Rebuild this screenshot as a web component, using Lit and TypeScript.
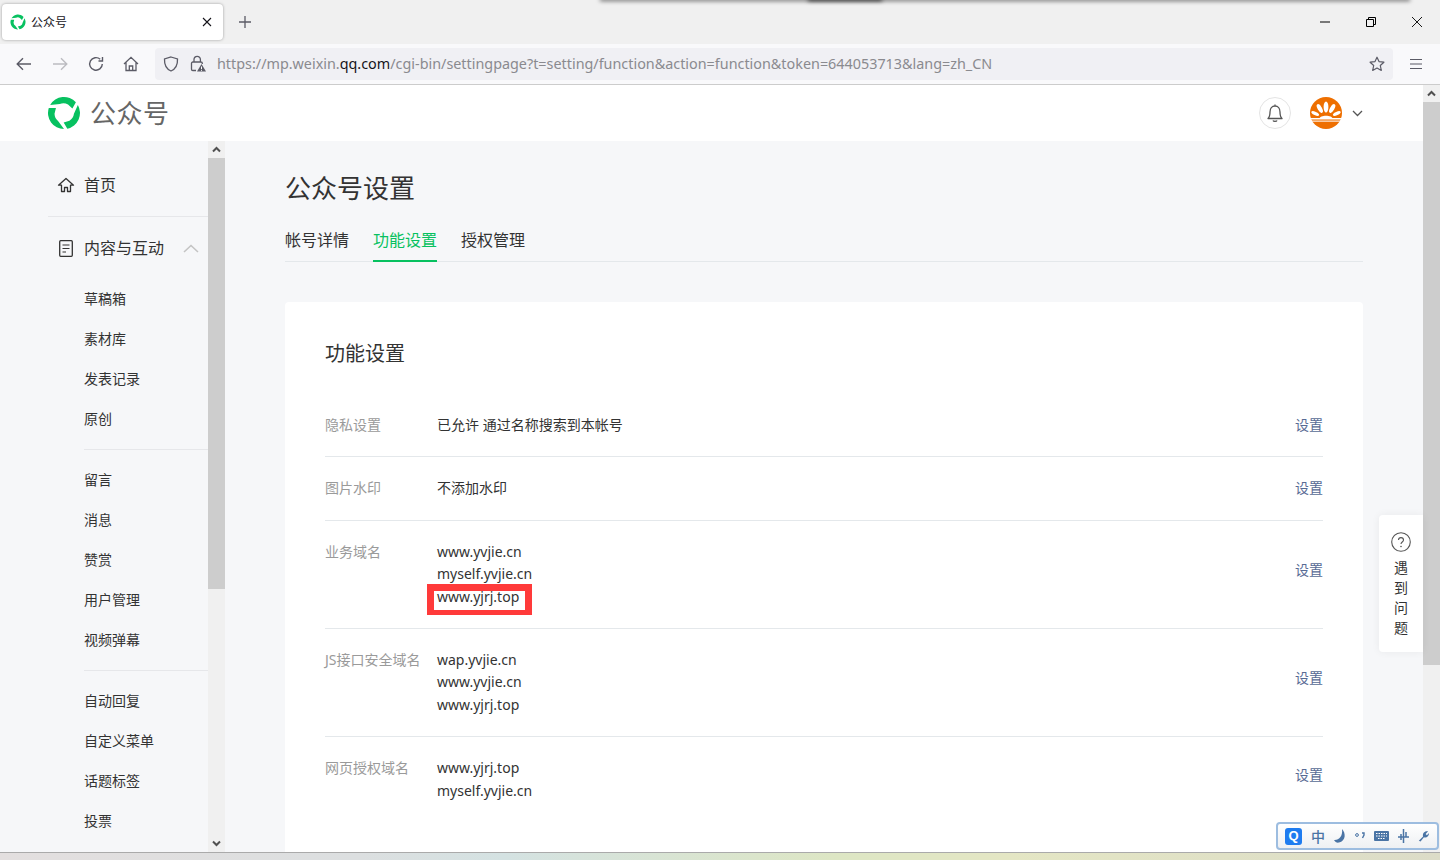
import { LitElement, html, css } from "lit";
import { customElement } from "lit/decorators.js";

const blade = "M3.14 9 A16 16 0 0 1 28.89 6.3 L25.39 12.54 L21.02 8.39 A9.5 9.5 0 0 0 12.77 7.94 Z";
const logo = (size: number) => html`<svg width=${size} height=${size} viewBox="0 0 34 34">
  <g fill="#07c160">
    <path d=${blade}/>
    <path d=${blade} transform="rotate(120 17 17)"/>
    <path d=${blade} transform="rotate(240 17 17)"/>
  </g>
</svg>`;

const chevron = (dir: "up" | "down") => html`<svg width="9" height="7" viewBox="0 0 9 7"><path d=${dir === "up" ? "M1 5.5 L4.5 2 L8 5.5" : "M1 1.5 L4.5 5 L8 1.5"} fill="none" stroke="#505050" stroke-width="2"/></svg>`;

const nav1 = ["草稿箱", "素材库", "发表记录", "原创"];
const nav2 = ["留言", "消息", "赞赏", "用户管理", "视频弹幕"];
const nav3 = ["自动回复", "自定义菜单", "话题标签", "投票"];

const rows = [
  { label: "隐私设置", lines: ["已允许 通过名称搜索到本帐号"], multi: false },
  { label: "图片水印", lines: ["不添加水印"], multi: false },
  { label: "业务域名", lines: ["www.yvjie.cn", "myself.yvjie.cn", "www.yjrj.top"], multi: true, mark: 2 },
  { label: "JS接口安全域名", lines: ["wap.yvjie.cn", "www.yvjie.cn", "www.yjrj.top"], multi: true },
  { label: "网页授权域名", lines: ["www.yjrj.top", "myself.yvjie.cn"], multi: true },
];

@customElement("app-root")
export class AppRoot extends LitElement {
  static styles = css`
    :host { display: block; width: 1440px; height: 860px; overflow: hidden; position: relative; font-family: "Noto Sans", "Noto Sans CJK SC", sans-serif; color: #333; }
    * { box-sizing: border-box; }
    .root { display: flex; flex-direction: column; height: 860px; }
    .tabbar { height: 44px; background: #f0f0f0; display: flex; align-items: flex-start; flex: none; }
    .tab { width: 221px; height: 36px; margin: 4px 0 0 2px; background: #fff; border-radius: 4px; box-shadow: 0 0 3px rgba(0,0,0,.35); display: flex; align-items: center; padding: 0 11px 0 8px; font-size: 12px; color: #15141a; gap: 5px; }
    .tab span { flex: 1; }
    .tab-new { margin: 10px 0 0 10px; width: 24px; height: 24px; display: flex; align-items: center; justify-content: center; }
    .win { margin-left: auto; display: flex; }
    .win div { width: 46px; height: 44px; display: flex; align-items: center; justify-content: center; }
    .toolbar { height: 41px; background: #f9f9fb; border-bottom: 1px solid #ccc; display: flex; align-items: center; flex: none; padding: 0 0 1px 0; }
    .tb { display: flex; justify-content: center; align-items: center; width: 36px; height: 32px; }
    .tb.first { margin-left: 6px; }
    .tb.home { margin-left: -1px; }
    .urlbar { margin-left: 6px; width: 1238px; height: 32px; background: #f0f0f4; border-radius: 4px; display: flex; align-items: center; padding: 0 8px 0 8px; }
    .lock { margin-left: 11px; }
    .url { margin-left: 11px; margin-bottom: 1px; font-size: 14.37px; color: #8a8a8f; white-space: nowrap; flex: 1; }
    .url b { font-weight: 400; color: #15141a; }
    .menu { margin-left: 5px; }
    .page { flex: 1; display: flex; min-height: 0; background: #f6f7f9; }
    .left { flex: 1; display: flex; flex-direction: column; min-width: 0; position: relative; }
    .header { height: 56px; background: #fff; flex: none; display: flex; align-items: center; padding: 0 60px 0 47px; }
    .brand { font-size: 26px; letter-spacing: .5px; color: #666; margin: 0 0 2px 9px; font-weight: 400; }
    .spacer { flex: 1; }
    .bell { width: 32px; height: 32px; border-radius: 50%; border: 1px solid #e4e4e4; display: flex; align-items: center; justify-content: center; }
    .avatar { margin-left: 19px; width: 32px; height: 32px; display: block; }
    .caret { margin-left: 10px; display: flex; }
    .body { flex: 1; display: flex; min-height: 0; }
    .side { width: 208px; flex: none; padding: 13px 0 0 48px; overflow: hidden; }
    .nav-top { display: flex; align-items: center; height: 62px; font-size: 16px; color: #333; padding-left: 9px; gap: 9px; }
    .nav-top svg { flex: none; }
    .nav-top span { margin-bottom: 2px; }
    .nav-top .fold { margin-left: 10px; }
    .nav-top .doc { margin: 0 2px; }
    .hr { height: 1px; background: #e6e7ea; }
    .sub { margin-left: 36px; }
    .sub .hr { margin: 10px 0; }
    .sub-item { height: 40px; line-height: 40px; font-size: 14px; color: #333; white-space: nowrap; }
    .sb { width: 17px; flex: none; background: #f0f0f0; display: flex; flex-direction: column; }
    .cap { height: 17px; flex: none; display: flex; align-items: center; justify-content: center; }
    .thumb { background: #cdcdcd; flex: none; }
    .thumb.inner { height: 431px; }
    .thumb.outer { height: 563px; }
    .fill { flex: 1; }
    .main { flex: 1; min-width: 0; padding: 29px 60px 0; overflow: hidden; }
    h1 { margin: 0; font-size: 26px; line-height: 36px; font-weight: 400; color: #333; }
    .tabs { display: flex; gap: 24px; margin-top: 14px; height: 42px; border-bottom: 1px solid #e4e8eb; }
    .tabs div { font-size: 16px; line-height: 40px; height: 42px; color: #333; }
    .tabs .on { color: #07c160; border-bottom: 2px solid #07c160; }
    .card { margin-top: 40px; background: #fff; border-radius: 4px; padding: 41px 40px 60px; }
    h2 { margin: 0 0 29px; font-size: 20px; line-height: 22px; font-weight: 400; color: #333; }
    .row { display: flex; padding: 20px 0; border-bottom: 1px solid #e4e8eb; font-size: 14px; line-height: 22.4px; }
    .row:last-child { border-bottom: 0; }
    .lab { width: 112px; flex: none; color: #9a9a9a; white-space: nowrap; }
    .val { flex: 1; color: #333; }
    .line { display: block; }
    .mark { position: relative; display: block; width: max-content; }
    .mark::after { content: ""; box-sizing: border-box; position: absolute; left: -10px; top: -2px; width: 105px; height: 31px; border: solid #ff3a3a; border-width: 7px 7px 5px 7px; }
    .act { color: #576b95; align-self: center; }
    .multi .act { margin-bottom: 9px; }
    .help { position: absolute; right: 0; top: 430px; width: 44px; height: 137px; background: #fff; border-radius: 4px 0 0 4px; box-shadow: 0 0 8px rgba(0,0,0,.06); display: flex; flex-direction: column; align-items: center; padding-top: 17px; font-size: 14px; color: #333; }
    .help span { line-height: 20px; }
    .help svg { margin-bottom: 6px; }
    .ime { position: absolute; left: 1276px; top: 822px; width: 163px; height: 28px; border: 2px solid #9dbde0; border-radius: 4px; background: linear-gradient(#fff, #eef0f3); display: flex; align-items: center; padding-left: 7px; gap: 9px; color: #4a74a5; font-size: 14px; font-weight: 500; }
    .ime-q { width: 17px; height: 17px; border-radius: 3px; background: #1e7cf0; color: #fff; font-size: 13px; line-height: 16px; text-align: center; font-family: "Liberation Sans", sans-serif; font-weight: 700; }
    .desk { height: 8px; flex: none; border-top: 1px solid #aaa; background: linear-gradient(90deg, #e3dfdf 0%, #dcdfe0 25%, #d4e2e2 35%, #dde6c4 58%, #e4e6c4 70%, #dcdcc8 100%); }
    .edge { position: absolute; left: 600px; right: 30px; top: -3px; height: 3px; box-shadow: 0 1px 4px rgba(0,0,0,.6); }
    .edge-dark { position: absolute; left: 808px; width: 74px; top: -3px; height: 3px; box-shadow: 0 1px 4px rgba(0,0,0,.8); }
  `;

  private link(label: string) {
    return html`<div class="sub-item">${label}</div>`;
  }

  render() {
    return html`<div class="root">
      <div class="tabbar">
        <div class="tab">${logo(16)}<span>公众号</span>
          <svg width="10" height="10" viewBox="0 0 10 10"><path d="M1 1 L9 9 M9 1 L1 9" stroke="#15141a" stroke-width="1.1"/></svg>
        </div>
        <div class="tab-new"><svg width="12" height="12" viewBox="0 0 12 12"><path d="M6 0 V12 M0 6 H12" stroke="#5b5b66" stroke-width="1.3"/></svg></div>
        <div class="win">
          <div><svg width="10" height="10" viewBox="0 0 10 10"><path d="M0 5 H10" stroke="#000"/></svg></div>
          <div><svg width="10" height="10" viewBox="0 0 10 10"><path d="M.5 2.5 H7.5 V9.5 H.5 Z M2.5 2.5 V.5 H9.5 V7.5 H7.5" fill="none" stroke="#000"/></svg></div>
          <div><svg width="10" height="10" viewBox="0 0 10 10"><path d="M0 0 L10 10 M10 0 L0 10" stroke="#000" stroke-width=".9"/></svg></div>
        </div>
      </div>
      <div class="toolbar">
        <div class="tb first"><svg width="16" height="14" viewBox="0 0 16 14"><path d="M15 7 H1.5 M7 1.2 L1.2 7 L7 12.8" fill="none" stroke="#5b5b66" stroke-width="1.4"/></svg></div>
        <div class="tb"><svg width="16" height="14" viewBox="0 0 16 14"><path d="M1 7 H14.5 M9 1.2 L14.8 7 L9 12.8" fill="none" stroke="#bcbcc1" stroke-width="1.4"/></svg></div>
        <div class="tb"><svg width="16" height="16" viewBox="0 0 16 16"><path d="M14.3 8 A6.3 6.3 0 1 1 12.2 3.2 M14.5 1 V5 H10.5" fill="none" stroke="#5b5b66" stroke-width="1.4"/></svg></div>
        <div class="tb home"><svg width="16" height="16" viewBox="0 0 16 16"><path d="M1 8 L8 1.3 L15 8 M3 6.5 V14.5 H13 V6.5 M6.3 14.5 V10 H9.7 V14.5" fill="none" stroke="#5b5b66" stroke-width="1.3"/></svg></div>
        <div class="urlbar">
          <svg width="16" height="16" viewBox="0 0 16 16"><path d="M8 1 L14.5 3 C14.8 9 12.5 13 8 15 C3.5 13 1.2 9 1.5 3 Z" fill="none" stroke="#5b5b66" stroke-width="1.3"/></svg>
          <svg class="lock" width="16" height="17" viewBox="0 0 16 17"><path d="M4 7 V4.5 A3.2 3.2 0 0 1 10.4 4.5 V7 M6 15.5 H2.8 A1.3 1.3 0 0 1 1.5 14.2 V8.3 A1.3 1.3 0 0 1 2.8 7 H11 A1.3 1.3 0 0 1 12.3 8.3 V9" fill="none" stroke="#5b5b66" stroke-width="1.3"/><path d="M11.5 9 L16 16.5 H7 Z" fill="#5b5b66"/><path d="M11.5 11.5 V14 M11.5 14.8 V15.8" stroke="#fff"/></svg>
          <div class="url">https://mp.weixin.<b>qq.com</b>/cgi-bin/settingpage?t=setting/function&action=function&token=644053713&lang=zh_CN</div>
          <svg width="16" height="16" viewBox="0 0 16 16"><path d="M8 1.2 L10 5.6 L14.9 6.2 L11.3 9.5 L12.3 14.4 L8 12 L3.7 14.4 L4.7 9.5 L1.1 6.2 L6 5.6 Z" fill="none" stroke="#5b5b66" stroke-width="1.2" stroke-linejoin="round"/></svg>
        </div>
        <div class="tb menu"><svg width="14" height="12" viewBox="0 0 14 12"><path d="M1 1.5 H13 M1 6 H13 M1 10.5 H13" stroke="#5b5b66" stroke-width="1.2"/></svg></div>
      </div>
      <div class="page">
        <div class="left">
          <div class="header">
            ${logo(34)}
            <div class="brand">公众号</div>
            <div class="spacer"></div>
            <div class="bell"><svg width="16" height="19" viewBox="0 0 16 19"><path d="M1 14.5 C2.8 13 3 11.5 3 8 C3 4.5 5 2 8 2 C11 2 13 4.5 13 8 C13 11.5 13.2 13 15 14.5 Z M6 16.5 C6.5 17.6 9.5 17.6 10 16.5 M8 .5 V2" fill="none" stroke="#555" stroke-width="1.3" stroke-linejoin="round"/></svg></div>
            <svg class="avatar" viewBox="0 0 32 32">
              <circle cx="16" cy="16" r="16" fill="#ee6f00"/>
              <g fill="#fff">
                <ellipse cx="16" cy="10" rx="2.4" ry="5.5"/>
                <ellipse cx="9.8" cy="11.5" rx="2.2" ry="4.8" transform="rotate(-30 9.8 11.5)"/>
                <ellipse cx="22.2" cy="11.5" rx="2.2" ry="4.8" transform="rotate(30 22.2 11.5)"/>
                <ellipse cx="5.2" cy="16.5" rx="1.7" ry="4.2" transform="rotate(-65 5.2 16.5)"/>
                <ellipse cx="26.8" cy="16.5" rx="1.7" ry="4.2" transform="rotate(65 26.8 16.5)"/>
                <path d="M9 22 C10 17.5 22 17.5 23 22 Z"/>
                <rect x="0" y="21" width="32" height="1.5"/>
                <rect x="1" y="23.5" width="30" height="1.3" opacity=".8"/>
              </g>
            </svg>
            <div class="caret"><svg width="11" height="7" viewBox="0 0 11 7"><path d="M1 1 L5.5 5.5 L10 1" fill="none" stroke="#555" stroke-width="1.3"/></svg></div>
          </div>
          <div class="body">
            <div class="side">
              <div class="nav-top"><svg width="18" height="16" viewBox="0 0 18 16"><path d="M1.5 8.2 L9 1.5 L16.5 8.2 H13.5 V14.5 H10.5 V10.5 H7.5 V14.5 H4.5 V8.2 Z" fill="none" stroke="#333" stroke-width="1.3" stroke-linejoin="round"/></svg><span>首页</span></div>
              <div class="hr"></div>
              <div class="nav-top"><svg class="doc" width="14" height="17" viewBox="0 0 14 17"><rect x=".7" y=".7" width="12.6" height="15.6" rx="1" fill="none" stroke="#333" stroke-width="1.3"/><path d="M3.5 5 H10.5 M3.5 8.5 H10.5 M3.5 12 H7" stroke="#333" stroke-width="1.2"/></svg><span>内容与互动</span><svg class="fold" width="16" height="9" viewBox="0 0 16 9"><path d="M1 8 L8 1.5 L15 8" fill="none" stroke="#c4c4c4" stroke-width="1.6"/></svg></div>
              <div class="sub">
                ${nav1.map((n) => this.link(n))}
                <div class="hr"></div>
                ${nav2.map((n) => this.link(n))}
                <div class="hr"></div>
                ${nav3.map((n) => this.link(n))}
              </div>
            </div>
            <div class="sb">
              <div class="cap">${chevron("up")}</div>
              <div class="thumb inner"></div>
              <div class="fill"></div>
              <div class="cap">${chevron("down")}</div>
            </div>
            <div class="main">
              <h1>公众号设置</h1>
              <div class="tabs"><div>帐号详情</div><div class="on">功能设置</div><div>授权管理</div></div>
              <div class="card">
                <h2>功能设置</h2>
                ${rows.map((r) => html`<div class="row ${r.multi ? "multi" : ""}">
                  <div class="lab">${r.label}</div>
                  <div class="val">${r.lines.map((l, i) => html`<span class=${r.mark === i ? "mark" : "line"}>${l}</span>`)}</div>
                  <div class="act">设置</div>
                </div>`)}
              </div>
            </div>
          </div>
          <div class="help">
            <svg width="20" height="20" viewBox="0 0 20 20"><circle cx="10" cy="10" r="9.3" fill="none" stroke="#555" stroke-width="1.1"/><path d="M7.5 8 C7.5 4.8 12.5 4.8 12.5 8 C12.5 10 10 10 10 12" fill="none" stroke="#555" stroke-width="1.1"/><circle cx="10" cy="14.5" r=".8" fill="#555"/></svg>
            <span>遇</span><span>到</span><span>问</span><span>题</span>
          </div>
        </div>
        <div class="sb">
          <div class="cap">${chevron("up")}</div>
          <div class="thumb outer"></div>
          <div class="fill"></div>
        </div>
      </div>
      <div class="desk"></div>
    </div>
    <div class="edge"></div>
    <div class="edge-dark"></div>
    <div class="ime">
      <div class="ime-q">Q</div><span>中</span>
      <svg width="12" height="14" viewBox="0 0 12 14"><path d="M8 0 C12 4 12 12 5 13.5 C3 14 1 13 0 11 C5 11.5 9 7 8 0 Z" fill="#4a74a5"/></svg>
      <svg width="10" height="8" viewBox="0 0 10 8"><circle cx="2" cy="3" r="1.4" fill="none" stroke="#4a74a5"/><path d="M7 1 H9 V3 L7.5 6" fill="none" stroke="#4a74a5" stroke-width="1.4"/></svg>
      <svg width="15" height="10" viewBox="0 0 15 10"><rect width="15" height="10" rx="1" fill="#4a74a5"/><path d="M2 2.5 H13 M2 5 H13 M4 7.5 H11" stroke="#fff" stroke-dasharray="1.5 1"/></svg>
      <svg width="11" height="14" viewBox="0 0 11 14"><path d="M5.5 0 V14 M0 8 H11 M3 5 V11 M8 3 V8" stroke="#4a74a5" stroke-width="1.5"/></svg>
      <svg width="11" height="12" viewBox="0 0 13 13"><path d="M1 12 L6 7 C5 3 8 0 12 1 L9 4 L10.5 5.5 L13 3 C13 7 10 9 7 8 L3 13 Z" fill="#4a74a5"/></svg>
    </div>`;
  }
}
